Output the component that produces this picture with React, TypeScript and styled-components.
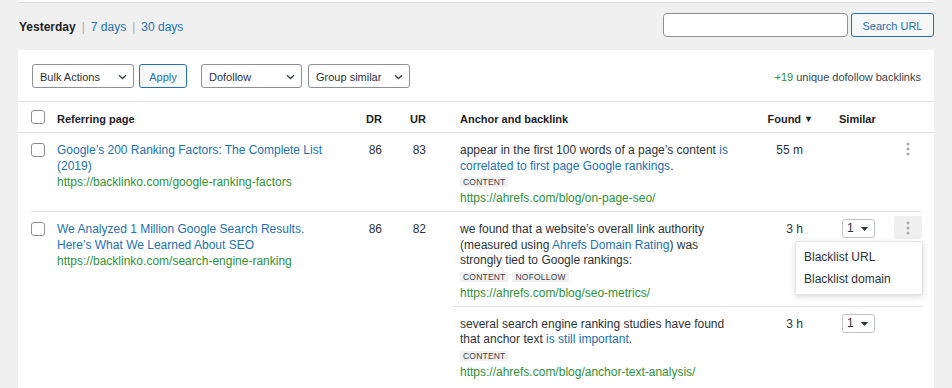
import React from "react";
import styled, { createGlobalStyle } from "styled-components";

const GlobalStyle = createGlobalStyle`
  html, body { margin: 0; padding: 0; }
  body {
    background: #f0f0f1;
    font-family: "Liberation Sans", Arial, Helvetica, sans-serif;
    color: #2c3338;
  }
  * { box-sizing: border-box; }
`;

const LINK = "#2271b1";
const GREEN = "#2f9237";

const Page = styled.div`
  padding: 0 18px;
  width: 952px;
  height: 388px;
  overflow: hidden;
`;

const TopStrip = styled.div`
  height: 3px;
  background: #fff;
  border-bottom: 1px solid #dcdcde;
`;

const FilterBar = styled.div`
  display: flex;
  align-items: center;
  justify-content: space-between;
  height: 24px;
  margin-top: 10px;
  margin-bottom: 13px;
`;

const Periods = styled.div`
  display: flex;
  align-items: center;
  font-size: 12px;
  padding-left: 1px;
  padding-top: 3px;
`;

const Period = styled.span<{ $active?: boolean }>`
  color: ${(p) => (p.$active ? "#1d2327" : LINK)};
  font-weight: ${(p) => (p.$active ? 700 : 400)};
`;

const Sep = styled.span`
  color: #a7aaad;
  margin: 0 6px;
`;

const SearchGroup = styled.div`
  display: flex;
  gap: 3px;
`;

const SearchInput = styled.div`
  width: 185px;
  height: 24px;
  border: 1px solid #8c8f94;
  border-radius: 4px;
  background: #fff;
`;

const Button = styled.div<{ $w: number }>`
  width: ${(p) => p.$w}px;
  height: 24px;
  border: 1px solid ${LINK};
  border-radius: 3px;
  background: #f6f7f7;
  color: ${LINK};
  font-size: 11px;
  padding-top: 1px;
  display: flex;
  align-items: center;
  justify-content: center;
`;

const Card = styled.div`
  background: #fff;
  height: 400px;
`;

const Toolbar = styled.div`
  display: flex;
  align-items: center;
  padding: 14px 13px 13px 14px;
  gap: 5px;
`;

const Select = styled.div<{ $w: number; $ml?: number }>`
  width: ${(p) => p.$w}px;
  margin-left: ${(p) => p.$ml ?? 0}px;
  height: 24px;
  border: 1px solid #8c8f94;
  border-radius: 3px;
  background: #fff;
  display: flex;
  align-items: center;
  justify-content: space-between;
  padding: 1px 6px 0 7px;
  font-size: 11px;
  color: #2c3338;
`;

const Summary = styled.div`
  margin-left: auto;
  font-size: 11px;
  padding-top: 1px;
  color: #3c434a;
`;

const Green = styled.span`
  color: ${GREEN};
`;

const COLS = "26px 295px 30px 44px 26px 308px 55px 69px 39px";

const Head = styled.div`
  display: grid;
  grid-template-columns: ${COLS};
  align-items: center;
  height: 32px;
  padding: 3px 13px 0;
  border-top: 1px solid #e2e4e7;
  border-bottom: 1px solid #e2e4e7;
  font-size: 11px;
  font-weight: 700;
  color: #1d2327;
`;

const HeadCell = styled.div<{ $align?: string; $pl?: number; $pr?: number }>`
  text-align: ${(p) => p.$align ?? "left"};
  padding-left: ${(p) => p.$pl ?? 0}px;
  padding-right: ${(p) => p.$pr ?? 0}px;
  white-space: nowrap;
`;

const SortArrow = styled.span`
  font-size: 9px;
  margin-left: 3px;
  vertical-align: 1px;
`;

const Checkbox = styled.div<{ $mt?: number }>`
  width: 14px;
  height: 14px;
  margin-top: ${(p) => p.$mt ?? 0}px;
  border: 1px solid #8c8f94;
  border-radius: 3px;
  background: #fff;
`;

const Rows = styled.div`
  padding: 0 13px;
`;

const Row = styled.div`
  display: grid;
  grid-template-columns: 26px 295px 30px 44px 26px 1fr;
  border-bottom: 1px solid #e2e4e7;
  font-size: 12px;
  line-height: 15.5px;
  &:last-child {
    border-bottom: none;
  }
`;

const LeftCell = styled.div<{ $align?: string }>`
  padding-top: 10px;
  text-align: ${(p) => p.$align ?? "left"};
`;

const CheckCell = styled.div`
  padding-top: 10px;
`;

const Title = styled.div`
  color: ${LINK};
  max-width: 280px;
`;

const Url = styled.div`
  color: ${GREEN};
  line-height: 16px;
  white-space: nowrap;
`;

const Backlinks = styled.div`
  display: flex;
  flex-direction: column;
`;

const BacklinkRow = styled.div<{ $first?: boolean }>`
  display: grid;
  grid-template-columns: 308px 55px 69px 39px;
  padding: 10px 0 5px;
  border-top: ${(p) => (p.$first ? "none" : "1px solid #e2e4e7")};
`;

const AnchorCell = styled.div`
  padding-left: 8px;
`;

const AnchorText = styled.div`
  max-width: 280px;
  color: #2c3338;
`;

const A = styled.span`
  color: ${LINK};
`;

const Tags = styled.div`
  display: flex;
  align-items: center;
  gap: 4px;
  height: 16px;
`;

const Tag = styled.span`
  font-size: 8.5px;
  line-height: 10px;
  padding: 0 3px;
  background: #f0f0f1;
  color: #3c434a;
  letter-spacing: 0.2px;
`;

const FoundCell = styled.div`
  text-align: right;
  padding-right: 12px;
`;

const SimilarCell = styled.div`
  padding-left: 27px;
`;

const MiniSelect = styled.div`
  width: 33px;
  height: 19px;
  margin-top: -3px;
  border: 1px solid #c3c4c7;
  border-radius: 3px;
  display: flex;
  align-items: center;
  justify-content: space-between;
  padding: 1px 6px 0 4px;
  font-size: 12px;
  color: #2c3338;
`;

const ActionsCell = styled.div`
  display: flex;
  justify-content: flex-end;
`;

const Kebab = styled.div<{ $active?: boolean }>`
  position: relative;
  width: 28px;
  height: 23px;
  margin-top: -6px;
  margin-right: 1px;
  border-radius: 2px;
  background: ${(p) => (p.$active ? "#f0f0f1" : "transparent")};
  display: flex;
  align-items: center;
  justify-content: center;
`;

const Menu = styled.div`
  position: absolute;
  top: 25px;
  right: -1px;
  width: 128px;
  padding: 4px 0;
  background: #fff;
  border: 1px solid #e2e4e7;
  border-radius: 2px;
  box-shadow: 0 2px 6px rgba(0, 0, 0, 0.14);
  z-index: 2;
`;

const MenuItem = styled.div`
  height: 22px;
  line-height: 23px;
  padding-left: 8px;
  font-size: 12px;
  color: #2c3338;
  white-space: nowrap;
`;

const Chevron = () => (
  <svg width="9" height="6" viewBox="0 0 9 6" fill="none">
    <path d="M1 1.2 L4.5 4.6 L8 1.2" stroke="#3c434a" strokeWidth="1.4" />
  </svg>
);

const Caret = () => (
  <svg width="7" height="4" viewBox="0 0 7 4">
    <path d="M0 0 H7 L3.5 4 Z" fill="#2c3338" />
  </svg>
);

const Dots = () => (
  <svg width="4" height="14" viewBox="0 0 4 14">
    <circle cx="2" cy="2" r="1.5" fill="#a7aaad" />
    <circle cx="2" cy="7" r="1.5" fill="#a7aaad" />
    <circle cx="2" cy="12" r="1.5" fill="#a7aaad" />
  </svg>
);

type Backlink = {
  anchor: React.ReactNode;
  tags: string[];
  url: string;
  found: string;
  similar?: string;
  kebab?: "plain" | "open";
};

type RowData = {
  title: string;
  url: string;
  dr: number;
  ur: number;
  links: Backlink[];
};

const rows: RowData[] = [
  {
    title: "Google’s 200 Ranking Factors: The Complete List (2019)",
    url: "https://backlinko.com/google-ranking-factors",
    dr: 86,
    ur: 83,
    links: [
      {
        anchor: (
          <>
            appear in the first 100 words of a page’s content{" "}
            <A>is correlated to first page Google rankings</A>.
          </>
        ),
        tags: ["CONTENT"],
        url: "https://ahrefs.com/blog/on-page-seo/",
        found: "55 m",
        kebab: "plain",
      },
    ],
  },
  {
    title: "We Analyzed 1 Million Google Search Results. Here’s What We Learned About SEO",
    url: "https://backlinko.com/search-engine-ranking",
    dr: 86,
    ur: 82,
    links: [
      {
        anchor: (
          <>
            we found that a website’s overall link authority (measured using{" "}
            <A>Ahrefs Domain Rating</A>) was strongly tied to Google rankings:
          </>
        ),
        tags: ["CONTENT", "NOFOLLOW"],
        url: "https://ahrefs.com/blog/seo-metrics/",
        found: "3 h",
        similar: "1",
        kebab: "open",
      },
      {
        anchor: (
          <>
            several search engine ranking studies have found that anchor text{" "}
            <A>is still important</A>.
          </>
        ),
        tags: ["CONTENT"],
        url: "https://ahrefs.com/blog/anchor-text-analysis/",
        found: "3 h",
        similar: "1",
      },
    ],
  },
];

export default function App() {
  return (
    <>
      <GlobalStyle />
      <Page>
        <TopStrip />
        <FilterBar>
          <Periods>
            <Period $active>Yesterday</Period>
            <Sep>|</Sep>
            <Period>7 days</Period>
            <Sep>|</Sep>
            <Period>30 days</Period>
          </Periods>
          <SearchGroup>
            <SearchInput />
            <Button $w={83}>Search URL</Button>
          </SearchGroup>
        </FilterBar>
        <Card>
          <Toolbar>
            <Select $w={102}>
              Bulk Actions <Chevron />
            </Select>
            <Button $w={48}>Apply</Button>
            <Select $w={101} $ml={9}>
              Dofollow <Chevron />
            </Select>
            <Select $w={102} $ml={1}>
              Group similar <Chevron />
            </Select>
            <Summary>
              <Green>+19</Green> unique dofollow backlinks
            </Summary>
          </Toolbar>
          <Head>
            <HeadCell>
              <Checkbox $mt={-3} />
            </HeadCell>
            <HeadCell>Referring page</HeadCell>
            <HeadCell $align="right">DR</HeadCell>
            <HeadCell $align="right">UR</HeadCell>
            <HeadCell />
            <HeadCell $pl={8}>Anchor and backlink</HeadCell>
            <HeadCell $align="right" $pr={2}>
              Found<SortArrow>▼</SortArrow>
            </HeadCell>
            <HeadCell $pl={24}>Similar</HeadCell>
            <HeadCell />
          </Head>
          <Rows>
            {rows.map((r, i) => (
              <Row key={i}>
                <CheckCell>
                  <Checkbox />
                </CheckCell>
                <LeftCell>
                  <Title>{r.title}</Title>
                  <Url>{r.url}</Url>
                </LeftCell>
                <LeftCell $align="right">{r.dr}</LeftCell>
                <LeftCell $align="right">{r.ur}</LeftCell>
                <div />
                <Backlinks>
                  {r.links.map((b, j) => (
                    <BacklinkRow key={j} $first={j === 0}>
                      <AnchorCell>
                        <AnchorText>{b.anchor}</AnchorText>
                        <Tags>
                          {b.tags.map((t) => (
                            <Tag key={t}>{t}</Tag>
                          ))}
                        </Tags>
                        <Url>{b.url}</Url>
                      </AnchorCell>
                      <FoundCell>{b.found}</FoundCell>
                      <SimilarCell>
                        {b.similar && (
                          <MiniSelect>
                            {b.similar} <Caret />
                          </MiniSelect>
                        )}
                      </SimilarCell>
                      <ActionsCell>
                        {b.kebab && (
                          <Kebab $active={b.kebab === "open"}>
                            <Dots />
                            {b.kebab === "open" && (
                              <Menu>
                                <MenuItem>Blacklist URL</MenuItem>
                                <MenuItem>Blacklist domain</MenuItem>
                              </Menu>
                            )}
                          </Kebab>
                        )}
                      </ActionsCell>
                    </BacklinkRow>
                  ))}
                </Backlinks>
              </Row>
            ))}
          </Rows>
        </Card>
      </Page>
    </>
  );
}
